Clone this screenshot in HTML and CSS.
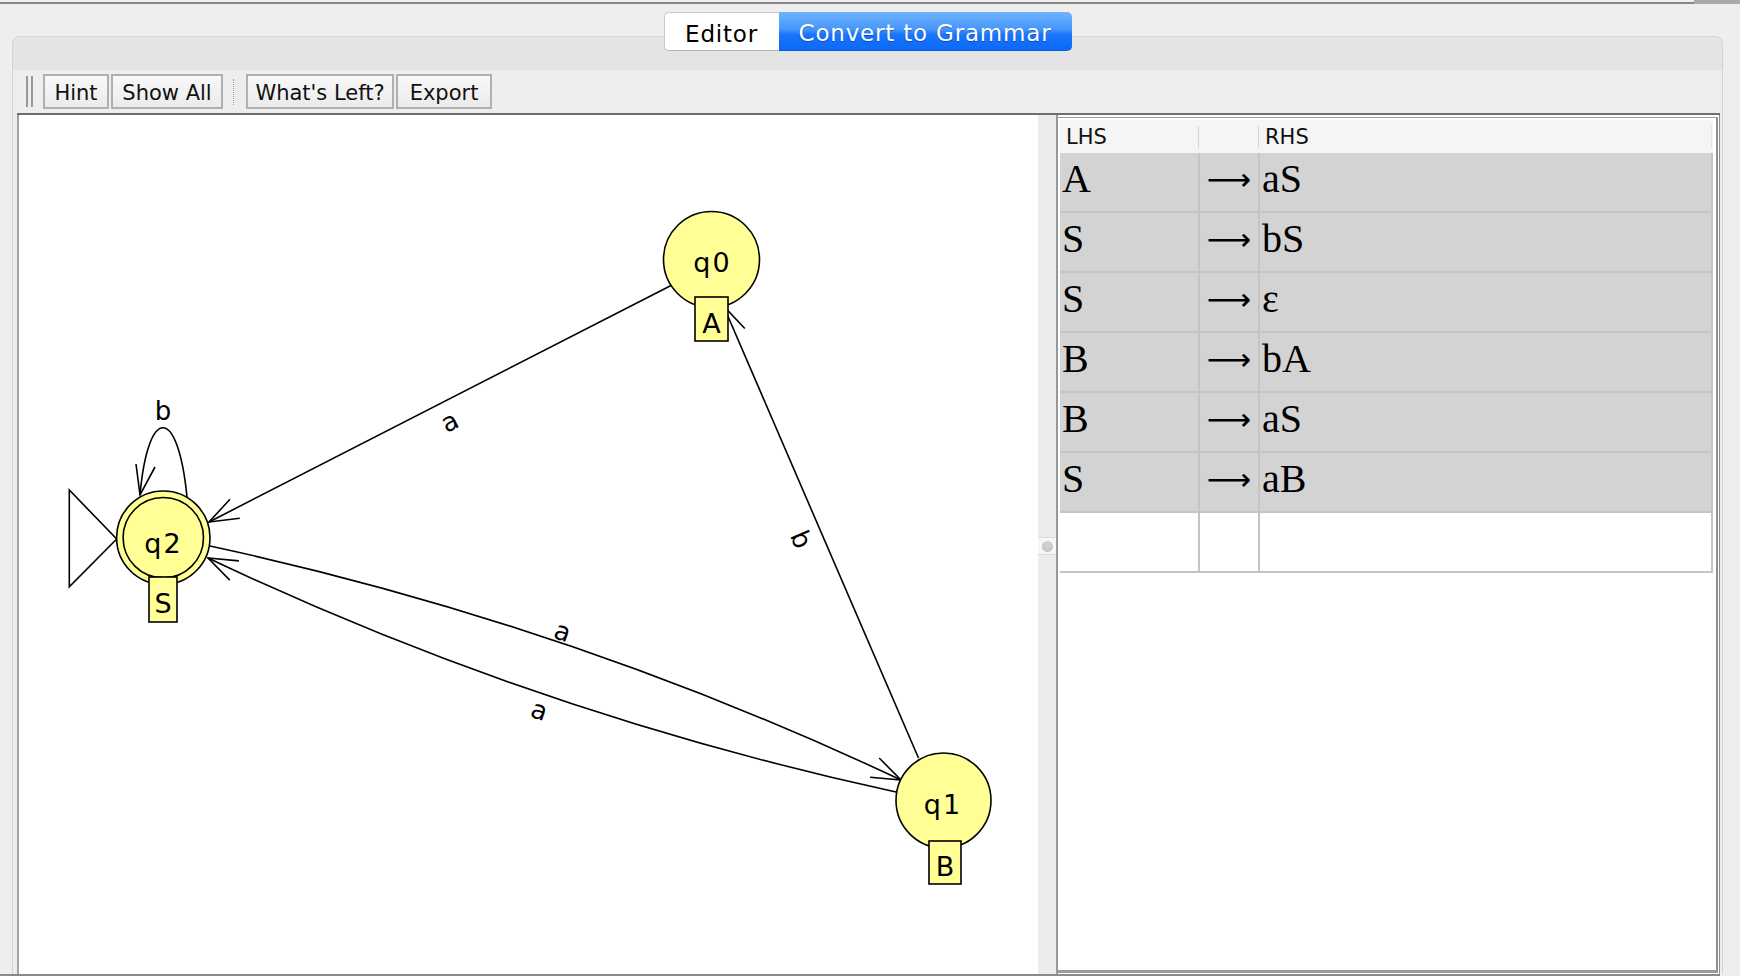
FILE: index.html
```html
<!DOCTYPE html>
<html>
<head>
<meta charset="utf-8">
<title>Convert to Grammar</title>
<link rel="stylesheet" href="styles.css">
</head>
<body>
<div class="topbar"><div class="topbar-line"></div><div class="topbar-end"></div></div>
<div class="window">
  <div class="tabs">
    <div class="tab tab-editor">Editor</div>
    <div class="tab tab-active">Convert to Grammar</div>
  </div>
  <div class="panel">
    <div class="panel-head"></div>
    <div class="toolbar">
      <div class="grip"></div>
      <div class="btn-group">
        <button class="btn btn-hint">Hint</button>
        <button class="btn btn-showall">Show All</button>
      </div>
      <div class="sep"></div>
      <div class="btn-group">
        <button class="btn btn-left">What's Left?</button>
        <button class="btn btn-export">Export</button>
      </div>
    </div>
    <div class="main">
      <div class="canvas">
        <svg class="graph" width="1019" height="859" viewBox="19 115 1019 859" xmlns="http://www.w3.org/2000/svg">
          <g class="edges">
            <path d="M672 285 L209 522"/>
            <path d="M230 499.3 L209 522 L239.8 518.2"/>
            <path d="M918.5 758 L723.5 306"/>
            <path d="M744.8 328.5 L723.5 306 L725.3 336.9"/>
            <path d="M210 546 Q568.8 623.5 901 780"/>
            <path d="M870.1 777.2 L901 780 L879.2 758"/>
            <path d="M896 792 Q538.2 714.5 208 558"/>
            <path d="M238.9 560.9 L208 558 L229.8 580.1"/>
            <path d="M187 497 C178 405 148 405 140 495"/>
            <path d="M136 464 L140 495 L155 467"/>
          </g>
          <polygon class="initial" points="69.3,490 69.3,586.7 116.7,539"/>
          <g class="states">
            <circle cx="711.5" cy="259.5" r="48"/>
            <circle cx="943.5" cy="800.5" r="47.5"/>
            <circle cx="163.3" cy="537.7" r="46.7"/>
            <circle cx="163.3" cy="537.7" r="40.2"/>
          </g>
          <g class="state-text">
            <text x="712.5" y="272">q0</text>
            <text x="943" y="813.5">q1</text>
            <text x="163.5" y="552.5">q2</text>
          </g>
          <g class="boxes">
            <rect x="695" y="297" width="33" height="44"/>
            <rect x="929" y="841" width="32" height="43"/>
            <rect x="149" y="577" width="28" height="45"/>
          </g>
          <g class="box-text">
            <text x="711.5" y="333.3">A</text>
            <text x="945" y="876">B</text>
            <text x="163" y="612.5">S</text>
          </g>
          <g class="edge-text">
            <text x="163" y="420">b</text>
            <text transform="translate(449.4 421.7) rotate(-27)" class="rot">a</text>
            <text transform="translate(801.2 539.3) rotate(67)" class="rot">b</text>
            <text transform="translate(562.6 631.4) rotate(18.6)" class="rot">a</text>
            <text transform="translate(539.3 710.2) rotate(18.6)" class="rot">a</text>
          </g>
        </svg>
      </div>
      <div class="splitter"><div class="split-grip"><span class="split-dot"></span></div></div>
      <div class="rightpane">
        <div class="scroll">
          <div class="grammar">
            <div class="gh gh-lhs">LHS</div>
            <div class="gh gh-arrow"></div>
            <div class="gh gh-rhs">RHS</div>

            <div class="gc gc-lhs">A</div><div class="gc gc-arrow"><span class="ar">⟶</span></div><div class="gc gc-rhs">aS</div>
            <div class="gc gc-lhs">S</div><div class="gc gc-arrow"><span class="ar">⟶</span></div><div class="gc gc-rhs">bS</div>
            <div class="gc gc-lhs">S</div><div class="gc gc-arrow"><span class="ar">⟶</span></div><div class="gc gc-rhs">ε</div>
            <div class="gc gc-lhs">B</div><div class="gc gc-arrow"><span class="ar">⟶</span></div><div class="gc gc-rhs">bA</div>
            <div class="gc gc-lhs">B</div><div class="gc gc-arrow"><span class="ar">⟶</span></div><div class="gc gc-rhs">aS</div>
            <div class="gc gc-lhs">S</div><div class="gc gc-arrow"><span class="ar">⟶</span></div><div class="gc gc-rhs">aB</div>

            <div class="gc gc-lhs gc-empty"></div><div class="gc gc-arrow gc-empty"></div><div class="gc gc-rhs gc-empty"></div>
          </div>
        </div>
      </div>
    </div>
  </div>
</div>
<div class="bottomline"></div>
</body>
</html>
```

FILE: styles.css
```css
* { box-sizing: border-box; }

html, body {
  margin: 0;
  padding: 0;
}

body {
  width: 1740px;
  height: 976px;
  overflow: hidden;
  background: #eeeeee;
  font-family: "DejaVu Sans", sans-serif;
  display: flex;
  flex-direction: column;
}

/* window top edge */
.topbar {
  display: flex;
  height: 4px;
  flex: none;
}
.topbar-line {
  flex: 1;
  background: linear-gradient(to bottom, #eeeeee 0 2px, #868686 2px 4px);
}
.topbar-end {
  width: 46px;
  background: #a9a9a9;
}

.window {
  flex: 1;
  margin-left: 12px;
  width: 1711px;
  display: flex;
  flex-direction: column;
  min-height: 0;
}

/* segmented tabs */
.tabs {
  flex: none;
  display: flex;
  justify-content: center;
  margin-top: 8px;
  margin-bottom: -15px;
  height: 39px;
  position: relative;
  z-index: 1;
}
.tab {
  height: 39px;
  font-size: 23px;
  letter-spacing: 0.8px;
  padding-top: 4px;
  line-height: 34px;
  text-align: center;
  white-space: nowrap;
}
.tab-editor {
  width: 115px;
  background: #ffffff;
  color: #000;
  border: 1px solid #c6c6c6;
  border-right: 0;
  border-bottom-color: #b4b4b4;
  border-radius: 5px 0 0 5px;
}
.tab-active {
  width: 293px;
  color: #fff;
  background: linear-gradient(to bottom, #70b3fd 0%, #4696fb 45%, #1a74fb 60%, #0a6afa 100%);
  border-radius: 0 5px 5px 0;
  border-bottom: 1px solid #0a5fe0;
  text-shadow: 0 1px 1px rgba(0, 0, 60, 0.35);
}

/* tab content panel */
.panel {
  flex: 1;
  min-height: 0;
  display: flex;
  flex-direction: column;
  border: 1px solid #d4d4d4;
  border-bottom: 0;
  border-radius: 8px 8px 0 0;
  background: #eeeeee;
}
.panel-head {
  flex: none;
  height: 33px;
  background: #e4e4e4;
  border-radius: 7px 7px 0 0;
}

/* toolbar */
.toolbar {
  flex: none;
  height: 43px;
  display: flex;
  align-items: center;
  padding-left: 13px;
  background: #eeeeee;
}
.grip {
  width: 7px;
  height: 31px;
  border-left: 2px solid #999999;
  border-right: 2px solid #999999;
  margin-right: 10px;
}
.btn-group {
  display: flex;
  gap: 2px;
}
.btn {
  height: 35px;
  margin: 0;
  padding: 3px 0 0;
  border: 2px solid #b0b0b0;
  background: linear-gradient(to bottom, #f8f8f8, #ebebeb);
  font-family: "DejaVu Sans", sans-serif;
  font-size: 21px;
  line-height: 28px;
  color: #111;
  text-align: center;
  white-space: nowrap;
}
.btn-hint { width: 66px; }
.btn-showall { width: 112px; }
.btn-left { width: 148px; }
.btn-export { width: 96px; }
.sep {
  width: 1px;
  height: 26px;
  border-left: 1px dotted #9b9b9b;
  margin: 0 12px 0 10px;
}

/* main split area */
.main {
  flex: 1;
  min-height: 0;
  display: flex;
  margin: 0 2px 0 4px;
  border-top: 2px solid #6e6e6e;
}
.canvas {
  width: 1021px;
  flex: none;
  background: #ffffff;
  border-left: 2px solid #a3a3a3;
  overflow: hidden;
}
.graph { display: block; }
.edges path {
  fill: none;
  stroke: #000;
  stroke-width: 1.6;
  stroke-linejoin: miter;
}
.initial {
  fill: #ffffff;
  stroke: #000;
  stroke-width: 1.6;
}
.states circle {
  fill: #ffff96;
  stroke: #000;
  stroke-width: 1.6;
}
.boxes rect {
  fill: #ffff96;
  stroke: #000;
  stroke-width: 1.6;
}
.state-text text {
  font-family: "DejaVu Sans", sans-serif;
  font-size: 27px;
  letter-spacing: 2px;
  text-anchor: middle;
  fill: #000;
}
.box-text text {
  font-family: "DejaVu Sans", sans-serif;
  font-size: 27px;
  text-anchor: middle;
  fill: #000;
}
.edge-text text {
  font-family: "DejaVu Sans", sans-serif;
  font-size: 26px;
  text-anchor: middle;
  fill: #000;
}
.edge-text .rot {
  dominant-baseline: central;
}

.splitter {
  width: 18px;
  flex: none;
  background: #ececec;
  display: flex;
  align-items: center;
  justify-content: center;
  padding-top: 3px;
}
.split-grip {
  width: 18px;
  height: 18px;
  background: #f6f6f6;
  border-top: 1px solid #dcdcdc;
  border-bottom: 1px solid #dcdcdc;
  display: flex;
  align-items: center;
  justify-content: center;
}
.split-dot {
  width: 11px;
  height: 11px;
  border-radius: 50%;
  background: radial-gradient(circle at 50% 40%, #d6d6d6, #bdbdbd);
}

.rightpane {
  width: 664px;
  flex: none;
  background: #ffffff;
  border-left: 2px solid #979797;
  border-right: 1px solid #8d8d8d;
  display: flex;
  flex-direction: column;
}
.scroll {
  flex: 1;
  margin: 2px 1px 1px 0;
  border-top: 1px solid #a0a0a0;
  border-right: 2px solid #8f8f8f;
  border-bottom: 3px solid #9a9a9a;
  padding: 2px 3px 0 2px;
  background: #ffffff;
}

/* grammar table */
.grammar {
  display: grid;
  grid-template-columns: 140px 60px 453px;
}
.gh {
  height: 33px;
  line-height: 34px;
  font-size: 21px;
  color: #111;
  background: #f5f5f5;
}
.gh-lhs,
.gh-arrow {
  background: linear-gradient(#d4d4d4, #d4d4d4) right 1px top 6px / 1px 22px no-repeat, #f5f5f5;
}
.gh-rhs {
  background: linear-gradient(#e2e2e2, #e2e2e2) right 1px top 6px / 1px 22px no-repeat, #f5f5f5;
}
.gh-lhs { padding-left: 6px; }
.gh-rhs { padding-left: 5px; }

.gc {
  height: 60px;
  border-bottom: 2px solid #c4c4c4;
  border-right: 2px solid #c4c4c4;
  background: #d3d3d3;
  font-family: "Liberation Serif", serif;
  font-size: 40px;
  line-height: 52px;
  color: #000;
  white-space: nowrap;
}
.gc-lhs { padding-left: 2px; }
.gc-arrow { text-align: center; }
.gc-rhs { padding-left: 2px; }
.gc-empty { background: #ffffff; }

.ar {
  display: inline-block;
  font-family: "DejaVu Sans", sans-serif;
  font-size: 31px;
  vertical-align: 2px;
}

.bottomline {
  flex: none;
  width: 1720px;
  height: 2px;
  background: #8a8a8a;
}
```
